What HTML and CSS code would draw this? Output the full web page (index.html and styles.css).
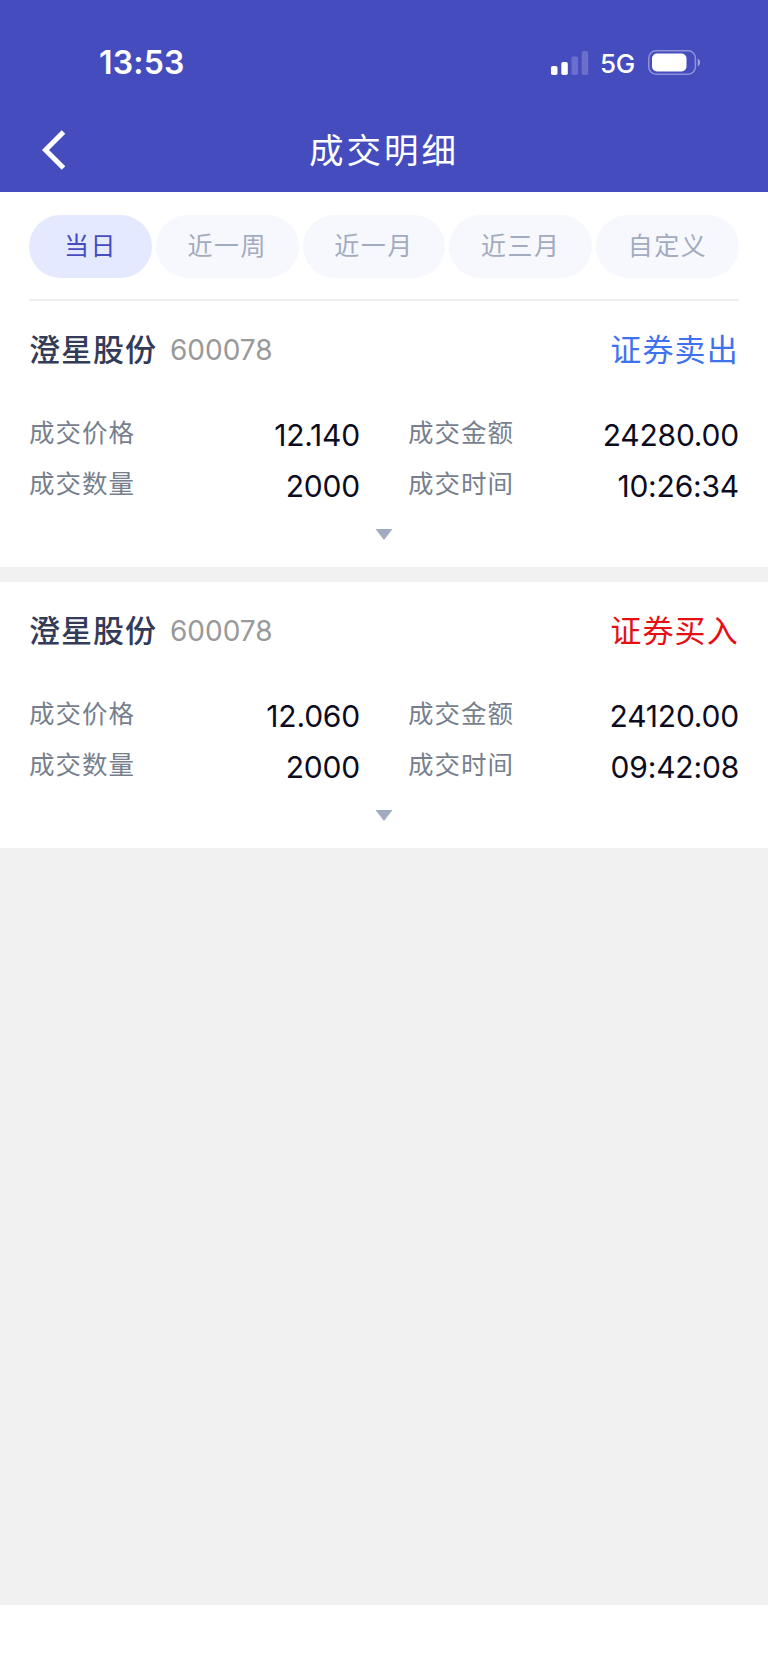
FILE: index.html
```html
<!DOCTYPE html>
<html lang="zh-CN">
<head>
    <meta charset="UTF-8">
    <meta name="viewport" content="width=device-width, initial-scale=1.0">
    <title>成交明细</title>
    <link rel="stylesheet" href="styles.css">
</head>
<body>

    <header class="header">
        <div class="status-bar">
            <span class="time">13:53</span>
            <div class="status-icons">
                <svg class="signal" width="38" height="24" viewBox="0 0 38 24" fill="#fff">
                    <rect x="0" y="15" width="6.5" height="9" rx="1.8"/>
                    <rect x="10.3" y="11" width="6.5" height="13" rx="1.8"/>
                    <rect x="20.5" y="5.5" width="6.5" height="18.5" rx="1.8" opacity=".2"/>
                    <rect x="30.7" y="0" width="6.5" height="24" rx="1.8" opacity=".2"/>
                </svg>
                <span class="network">5G</span>
                <svg class="battery" width="53" height="25" viewBox="0 0 53 25">
                    <rect x=".8" y=".8" width="46.6" height="23.4" rx="7.2" fill="none" stroke="#fff" stroke-opacity=".4" stroke-width="1.5"/>
                    <rect x="4" y="3.5" width="34.5" height="18" rx="5" fill="#fff"/>
                    <path d="M49.8 8.6c3 1.6 3 6.2 0 7.8z" fill="#fff" opacity=".5"/>
                </svg>
            </div>
        </div>
        <div class="nav-bar">
            <svg class="back" width="24" height="40" viewBox="0 0 24 40">
                <path d="M21.5 2L3.5 20l18 18" fill="none" stroke="#fff" stroke-width="5"/>
            </svg>
            <h1 class="title">成交明细</h1>
        </div>
    </header>

    <main class="content">
        <section class="filters">
            <nav class="tabs">
                <a class="tab active">当日</a>
                <a class="tab">近一周</a>
                <a class="tab">近一月</a>
                <a class="tab">近三月</a>
                <a class="tab">自定义</a>
            </nav>
        </section>

        <article class="card">
            <div class="card-head">
                <span class="name">澄星股份</span>
                <span class="code">600078</span>
                <span class="side sell">证券卖出</span>
            </div>
            <dl class="details">
                <div class="item"><dt>成交价格</dt><dd>12.140</dd></div>
                <div class="item"><dt>成交金额</dt><dd>24280.00</dd></div>
                <div class="item"><dt>成交数量</dt><dd>2000</dd></div>
                <div class="item"><dt>成交时间</dt><dd>10:26:34</dd></div>
            </dl>
            <div class="arrow"></div>
        </article>

        <article class="card">
            <div class="card-head">
                <span class="name">澄星股份</span>
                <span class="code">600078</span>
                <span class="side buy">证券买入</span>
            </div>
            <dl class="details">
                <div class="item"><dt>成交价格</dt><dd>12.060</dd></div>
                <div class="item"><dt>成交金额</dt><dd>24120.00</dd></div>
                <div class="item"><dt>成交数量</dt><dd>2000</dd></div>
                <div class="item"><dt>成交时间</dt><dd>09:42:08</dd></div>
            </dl>
            <div class="arrow"></div>
        </article>
    </main>

    <footer class="safe-area"></footer>

</body>
</html>
```

FILE: styles.css
```css
* { box-sizing: border-box; margin: 0; padding: 0; }

body {
    display: flex;
    flex-direction: column;
    height: 1670px;
    font-family: Inter, "Noto Sans CJK SC", sans-serif;
    background-color: #fff;
    overflow: hidden;
}

/* header */
.header {
    height: 192px;
    background-color: #444cbe;
    color: #fff;
}
.status-bar {
    display: flex;
    justify-content: space-between;
    align-items: center;
    height: 108px;
    padding: 17px 67px 0 99px;
}
.time { font-size: 32px; font-weight: 600; letter-spacing: 0.2px; }
.status-icons { display: flex; align-items: center; }
.network { margin: 2px 13px 0 11px; font-size: 26px; font-weight: 500; letter-spacing: -0.2px; }
.nav-bar {
    display: flex;
    align-items: center;
    height: 84px;
    padding: 0 42px;
}
.title {
    flex: 1;
    margin-right: 24px;
    padding-bottom: 4px;
    font-size: 34.5px;
    font-weight: 400;
    letter-spacing: 3px;
    text-align: center;
}

/* content */
.content { flex: 1; background-color: #f1f1f1; }
.filters { padding: 23px 29px 0; background-color: #fff; }
.tabs {
    display: flex;
    gap: 4px;
    height: 86px;
    border-bottom: 2px solid #eeeeef;
}
.tab {
    flex: 143;
    height: 63px;
    border-radius: 32px;
    background-color: #f7f8fd;
    color: #a2abbf;
    font-size: 25px;
    line-height: 63px;
    letter-spacing: 1.5px;
    text-align: center;
}
.tab.active { flex: 123; background-color: #e5e9ff; color: #444cbe; }

.card {
    height: 266px;
    padding: 0 29px;
    background-color: #fff;
}
.card + .card { margin-top: 15px; }
.card-head {
    display: flex;
    align-items: center;
    height: 98px;
}
.name { padding-bottom: 5px; font-size: 31px; font-weight: 500; letter-spacing: 1px; color: #343b58; }
.code { margin-left: 13px; padding-bottom: 1px; font-size: 28px; color: #999; }
.side { margin-left: auto; padding-bottom: 5px; font-size: 31px; letter-spacing: 1.2px; }
.sell { color: #3f73ee; }
.buy { color: #e60f14; }

.details {
    display: grid;
    grid-template-columns: 331px 331px;
    column-gap: 48px;
    grid-auto-rows: 51px;
    padding-top: 8px;
}
.item { display: flex; justify-content: space-between; }
dt { font-size: 25.5px; line-height: 51px; letter-spacing: 1px; color: #777f8e; }
dd { font-size: 30px; line-height: 56px; letter-spacing: -0.2px; color: #0c0c1e; }

.arrow {
    width: 17px;
    height: 11px;
    margin: 20px auto 0;
    background-color: #a2abbf;
    clip-path: polygon(0 0, 100% 0, 50% 100%);
}

.safe-area { height: 65px; background-color: #fff; }
```
